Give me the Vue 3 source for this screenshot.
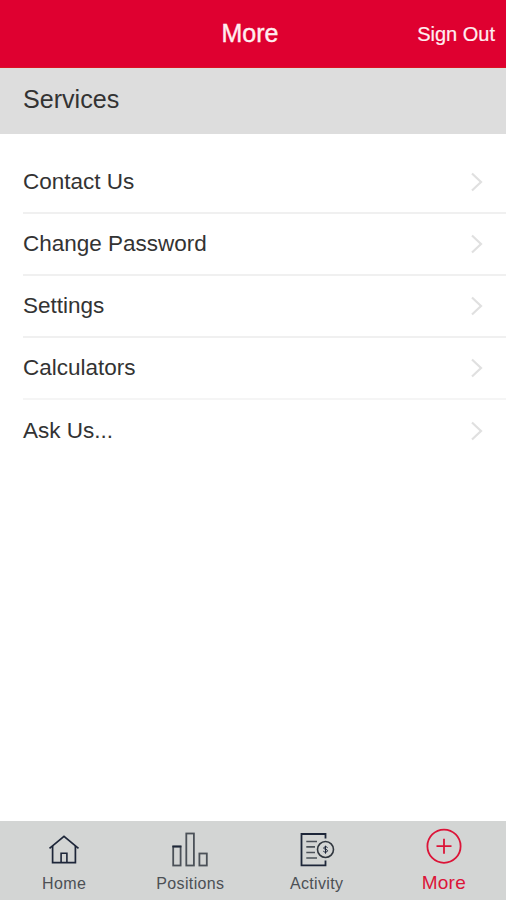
<script setup>
const services = ['Contact Us', 'Change Password', 'Settings', 'Calculators', 'Ask Us...']
const tabs = ['Home', 'Positions', 'Activity', 'More']
</script>

<template>
  <div class="screen">
    <header class="topbar">
      <span></span>
      <h1>More</h1>
      <a class="signout">Sign Out</a>
    </header>
    <h2 class="section">Services</h2>
    <ul class="list">
      <li v-for="item in services" :key="item" class="row">
        <span>{{ item }}</span>
        <svg class="chevron" width="12" height="20" viewBox="0 0 12 20">
          <path d="M1 1.5 10 10 1 18.5" fill="none" stroke="#e0e0e0" stroke-width="2.2" />
        </svg>
      </li>
    </ul>
    <nav class="tabs">
      <a v-for="tab in tabs" :key="tab" class="tab" :class="{ active: tab === 'More' }">
        <svg class="icon" width="40" height="40" viewBox="0 0 40 40" fill="none">
          <g v-if="tab === 'Home'" stroke="#1d2639" stroke-width="1.7">
            <path d="M5.5 20.3 20 8.3 34.5 20.3" />
            <path d="M8.6 18V34.6H31.4V18" />
            <path d="M17.1 34V25.3H22.9V34" stroke-width="1.6" />
          </g>
          <g v-else-if="tab === 'Positions'" stroke="#4b5158" stroke-width="1.8">
            <rect x="3.2" y="18.5" width="7.4" height="19" />
            <rect x="16.3" y="5.5" width="7.6" height="32" />
            <rect x="29.4" y="25.5" width="7.4" height="12" />
            <path d="M2.4 18.5h9" stroke="#1d2639" />
          </g>
          <g v-else-if="tab === 'Activity'" stroke="#1d2639" stroke-width="1.8">
            <path d="M28.5 10.5V6H4.5V37.3H28.5V32.5" />
            <path d="M9.3 13.5H20M9.3 18.9H18M9.3 24.5H18M9.3 30H20" stroke="#4b5158" stroke-width="1.6" />
            <circle cx="28.5" cy="21.5" r="8" stroke="#30363e" stroke-width="1.6" />
            <path d="M30.6 19.7C30 18.4 26.7 18.4 26.7 20.1 26.7 21.7 30.6 20.9 30.6 22.8 30.6 24.5 27 24.5 26.3 23.2M28.5 17.7V25.7" stroke-width="1" />
          </g>
          <g v-else stroke="#dc1438" stroke-width="1.8">
            <circle cx="20" cy="19.2" r="16.6" />
            <path d="M12.5 19.2H27.5M20 11.7V26.7" />
          </g>
        </svg>
        <span class="label">{{ tab }}</span>
      </a>
    </nav>
  </div>
</template>

<style>
body {
  margin: 0;
}
</style>

<style scoped>
.screen {
  display: flex;
  flex-direction: column;
  height: 900px;
  overflow: hidden;
  background: #fff;
  color: #333;
  font-family: "Liberation Sans", Arial, sans-serif;
}
.topbar {
  display: grid;
  grid-template-columns: 1fr auto 1fr;
  align-items: center;
  box-sizing: border-box;
  height: 68px;
  padding: 0 11px 0 5px;
  background: #df0030;
  border-bottom: 1px solid #da1423;
  color: #ffeef0;
}
h1,
h2 {
  margin: 0;
  font-weight: 400;
}
h1 {
  font-size: 25px;
  line-height: 30px;
  padding-bottom: 2px;
  -webkit-text-stroke: 0.4px;
}
.signout {
  justify-self: end;
  font-size: 20px;
  line-height: 24px;
  padding-top: 1px;
  -webkit-text-stroke: 0.2px;
}
.section {
  box-sizing: border-box;
  height: 66px;
  padding-left: 23px;
  background: #ddd;
  font-size: 25.1px;
  line-height: 63px;
}
.list {
  flex: 1;
  margin: 0;
  padding: 18px 0 0 23px;
  list-style: none;
}
.row {
  display: flex;
  align-items: center;
  justify-content: space-between;
  box-sizing: border-box;
  height: 62px;
  padding-right: 23px;
  border-bottom: 2px solid #f0f0f0;
  font-size: 22.5px;
}
.row:nth-child(4) {
  border-bottom-color: #f5f5f5;
}
.row:last-child {
  border-bottom: 0;
}
.tabs {
  display: flex;
  box-sizing: border-box;
  height: 79px;
  padding: 7px 0 0 1px;
  background: #d3d5d4;
}
.tab {
  flex: 1;
  display: flex;
  flex-direction: column;
  align-items: center;
  color: #4c5054;
}
.icon {
  display: block;
}
.label {
  font-size: 16px;
  line-height: 20px;
  padding-top: 6px;
  letter-spacing: 0.35px;
}
.active {
  padding-left: 1px;
  margin-right: -1px;
}
.active .icon {
  margin-top: -1px;
}
.active .label {
  font-size: 19px;
  letter-spacing: 0.2px;
  color: #dc1438;
}
</style>
